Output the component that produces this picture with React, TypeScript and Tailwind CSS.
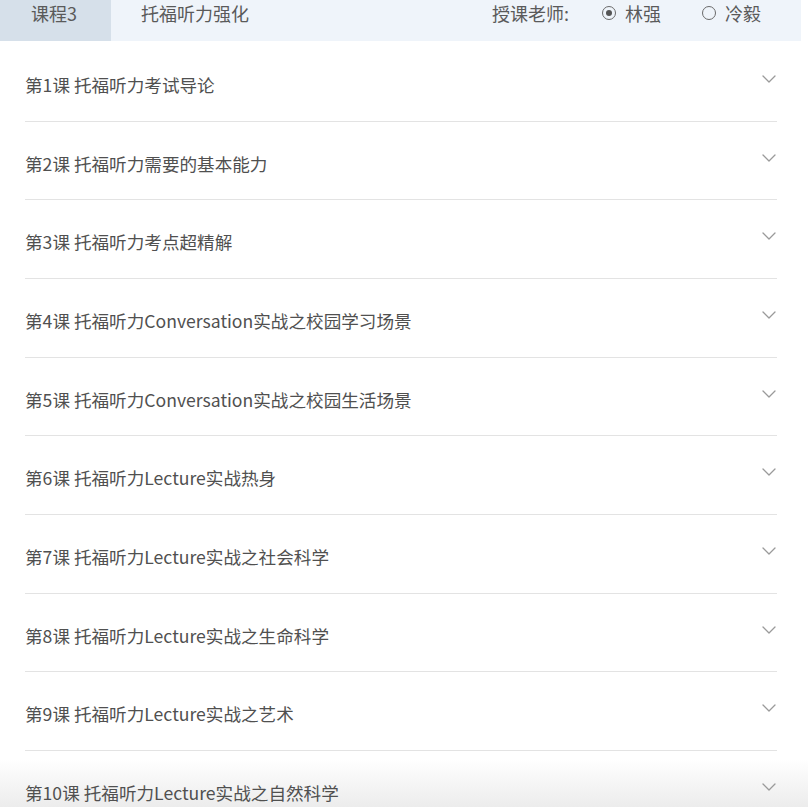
import { ChevronDown } from "lucide-react";

const lessons = [
  "托福听力考试导论",
  "托福听力需要的基本能力",
  "托福听力考点超精解",
  "托福听力Conversation实战之校园学习场景",
  "托福听力Conversation实战之校园生活场景",
  "托福听力Lecture实战热身",
  "托福听力Lecture实战之社会科学",
  "托福听力Lecture实战之生命科学",
  "托福听力Lecture实战之艺术",
  "托福听力Lecture实战之自然科学",
];

const font = { fontFamily: '"Noto Sans CJK SC", "Noto Sans", sans-serif' };

function Radio({ checked }: { checked?: boolean }) {
  return (
    <span className="flex h-[14px] w-[14px] items-center justify-center rounded-full border-[1.3px] border-[#6a6a6a]">
      {checked ? <span className="h-[6px] w-[6px] rounded-full bg-[#555]" /> : null}
    </span>
  );
}

export default function App() {
  return (
    <div className="relative h-[807px] w-[808px] overflow-hidden bg-white" style={font}>
      {/* bottom fade sits behind the list */}
      <div className="pointer-events-none absolute bottom-0 left-0 h-[48px] w-full bg-linear-to-b from-[#ffffff] to-[#ececec]" />

      {/* course header */}
      <header className="relative flex h-[41px] w-[801px] bg-[#eff4fa] text-[18px] leading-[26px] text-[#5a5a5a]">
        <div className="w-[111px] bg-[#d6e0ea] pl-[31px]">课程3</div>
        <div className="pl-[30px]">托福听力强化</div>
        <div className="ml-auto flex items-start pr-[40px]">
          <span>授课老师:</span>
          <span className="ml-[33px] flex items-center gap-[9px]">
            <Radio checked />
            林强
          </span>
          <span className="ml-[41px] flex items-center gap-[9px]">
            <Radio />
            冷毅
          </span>
        </div>
      </header>

      {/* lesson list */}
      <ul className="relative ml-[25px] mr-[31px] pt-[2px]">
        {lessons.map((title, i) => (
          <li
            key={i}
            className="flex h-[78.66px] items-start justify-between border-b border-[#e3e3e3] pt-[30px] text-[17.6px] leading-[24px] text-[#505050]"
          >
            <span>
              第{i + 1}课 {title}
            </span>
            <ChevronDown
              className="mr-[-4px] mt-[-6px] text-[#9a9a9a]"
              size={24}
              strokeWidth={1.3}
            />
          </li>
        ))}
      </ul>
    </div>
  );
}
